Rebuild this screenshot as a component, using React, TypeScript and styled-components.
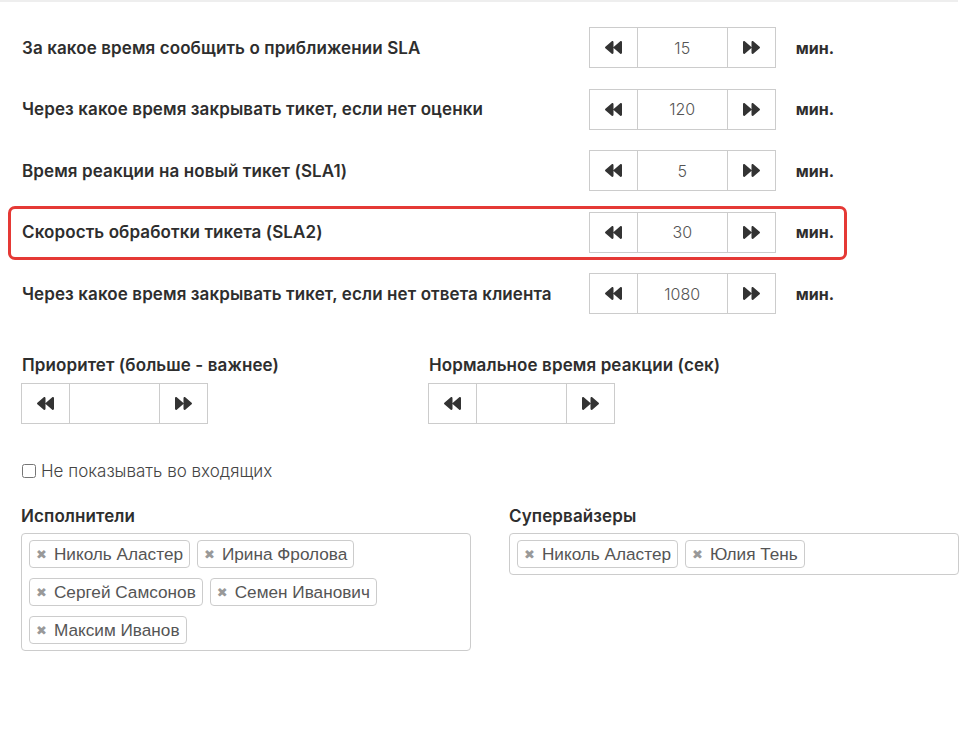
import React from "react";
import styled, { createGlobalStyle } from "styled-components";
import { FaBackward, FaForward } from "react-icons/fa";

const GlobalStyle = createGlobalStyle`
  body {
    margin: 0;
    background: #fff;
    font-family: Inter, "Noto Sans", sans-serif;
    color: #333;
  }
`;

const Page = styled.div`
  width: 958px;
  border-top: 2px solid #eee;
  padding: 25px 0 40px;
  box-sizing: border-box;
`;

const Rows = styled.div`
  display: flex;
  flex-direction: column;
  gap: 20.5px;
  padding-left: 22px;
`;

const Row = styled.div<{ $highlight?: boolean }>`
  position: relative;
  display: flex;
  align-items: center;
  width: 812px;

  ${(p) =>
    p.$highlight &&
    `
    &::after {
      content: "";
      position: absolute;
      left: -14px;
      right: -13px;
      top: -6px;
      bottom: -7px;
      border: 3px solid #e53935;
      border-radius: 7px;
      pointer-events: none;
    }
  `}
`;

const Label = styled.div<{ $width?: number }>`
  width: ${(p) => (p.$width ? `${p.$width}px` : "auto")};
  font-size: 17px;
  font-weight: 600;
  letter-spacing: 0.1px;
  color: #2e2e2e;
  white-space: nowrap;
`;

const Spinner = styled.div`
  display: flex;
  height: 41px;
  flex-shrink: 0;
`;

const SpinBtn = styled.button`
  width: 49px;
  height: 100%;
  border: 1px solid #ccc;
  background: #fff;
  display: flex;
  align-items: center;
  justify-content: center;
  color: #333;
  padding: 0;
  cursor: pointer;
`;

const SpinInput = styled.input`
  width: 89px;
  height: 100%;
  box-sizing: border-box;
  border: none;
  border-top: 1px solid #ccc;
  border-bottom: 1px solid #ccc;
  text-align: center;
  font-family: Inter, "Noto Sans", sans-serif;
  font-size: 16px;
  font-weight: 300;
  color: #555;
  outline: none;
  padding: 0;
`;

const Unit = styled.span`
  margin-left: 20px;
  font-size: 16px;
  font-weight: 700;
  color: #2e2e2e;
`;

const Groups = styled.div`
  display: grid;
  grid-template-columns: 407px 407px;
  padding-left: 21px;
  margin-top: 41px;
`;

const Group = styled.div`
  display: flex;
  flex-direction: column;
  align-items: flex-start;
  gap: 8px;

  ${Label} {
    padding-left: 1px;
  }
`;

const CheckRow = styled.label`
  display: flex;
  align-items: center;
  gap: 5px;
  margin: 37px 0 0 22px;
  font-size: 17px;
  font-weight: 300;
  color: #444;

  input {
    margin: 0;
    width: 14px;
    height: 14px;
  }
`;

const Pickers = styled.div`
  display: grid;
  grid-template-columns: 450px 450px;
  column-gap: 38px;
  padding-left: 21px;
  margin-top: 25px;
  align-items: start;
`;

const Picker = styled.div`
  display: flex;
  flex-direction: column;
  gap: 7px;
`;

const TagBox = styled.div`
  display: flex;
  flex-wrap: wrap;
  gap: 10px 7px;
  padding: 6px 7px 6px 7px;
  border: 1px solid #ccc;
  border-radius: 4px;
  min-height: 28px;
`;

const Tag = styled.span`
  display: inline-flex;
  align-items: center;
  height: 28px;
  box-sizing: border-box;
  padding: 0 6px 0 6px;
  border: 1px solid #ccc;
  border-radius: 4px;
  background: #fff;
  font-family: "Liberation Sans", Arial, sans-serif;
  font-size: 17.2px;
  color: #555;
`;

const Remove = styled.span`
  font-family: "DejaVu Sans", sans-serif;
  font-size: 13px;
  font-weight: 700;
  color: #999;
  margin-right: 7px;
  line-height: 1;
`;

type NumberRowProps = {
  label: string;
  value: string;
  highlight?: boolean;
};

const Counter = ({ value }: { value: string }) => (
  <Spinner>
    <SpinBtn>
      <FaBackward size={17} />
    </SpinBtn>
    <SpinInput defaultValue={value} />
    <SpinBtn>
      <FaForward size={17} />
    </SpinBtn>
  </Spinner>
);

const NumberRow = ({ label, value, highlight }: NumberRowProps) => (
  <Row $highlight={highlight}>
    <Label $width={568}>{label}</Label>
    <Counter value={value} />
    <Unit>мин.</Unit>
  </Row>
);

const rows: NumberRowProps[] = [
  { label: "За какое время сообщить о приближении SLA", value: "15" },
  { label: "Через какое время закрывать тикет, если нет оценки", value: "120" },
  { label: "Время реакции на новый тикет (SLA1)", value: "5" },
  { label: "Скорость обработки тикета (SLA2)", value: "30", highlight: true },
  { label: "Через какое время закрывать тикет, если нет ответа клиента", value: "1080" },
];

const TagPicker = ({ title, names }: { title: string; names: string[] }) => (
  <Picker>
    <Label>{title}</Label>
    <TagBox>
      {names.map((n) => (
        <Tag key={n}>
          <Remove>✖</Remove>
          {n}
        </Tag>
      ))}
    </TagBox>
  </Picker>
);

export default function App() {
  return (
    <>
      <GlobalStyle />
      <Page>
        <Rows>
          {rows.map((r) => (
            <NumberRow key={r.label} {...r} />
          ))}
        </Rows>

        <Groups>
          <Group>
            <Label>Приоритет (больше - важнее)</Label>
            <Counter value="" />
          </Group>
          <Group>
            <Label>Нормальное время реакции (сек)</Label>
            <Counter value="" />
          </Group>
        </Groups>

        <CheckRow>
          <input type="checkbox" />
          Не показывать во входящих
        </CheckRow>

        <Pickers>
          <TagPicker
            title="Исполнители"
            names={[
              "Николь Аластер",
              "Ирина Фролова",
              "Сергей Самсонов",
              "Семен Иванович",
              "Максим Иванов",
            ]}
          />
          <TagPicker title="Супервайзеры" names={["Николь Аластер", "Юлия Тень"]} />
        </Pickers>
      </Page>
    </>
  );
}
